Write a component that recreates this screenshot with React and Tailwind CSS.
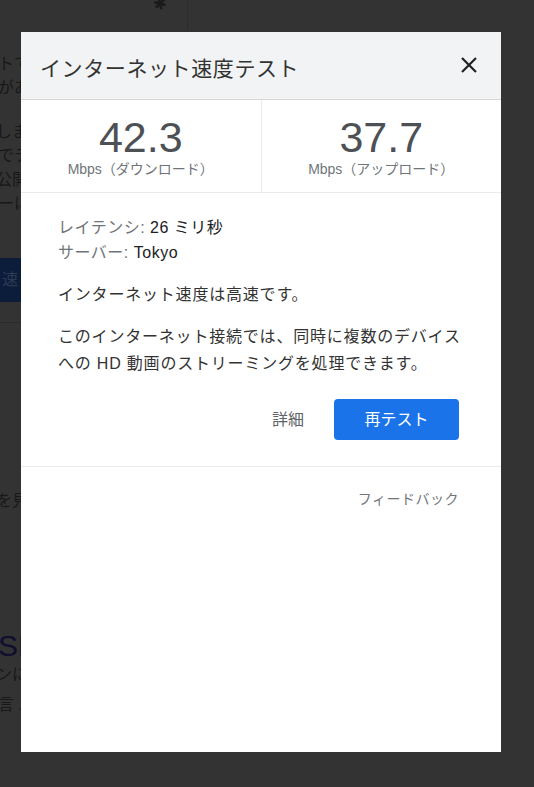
import React from "react";

const jp = { fontFamily: '"Liberation Sans", "Noto Sans CJK JP", sans-serif' };

const SpeedCell = ({ value, label, border }) => (
  <div
    className={`flex flex-1 flex-col items-center pt-[14px] ${border ? "border-r border-[#ebebeb]" : ""}`}
  >
    <div className="text-[43px] leading-[46px] text-[#4d5156]">{value}</div>
    <div className="text-[14px] leading-[18px] text-[#70757a]">{label}</div>
  </div>
);

const App = () => {
  return (
    <div
      className="relative h-[787px] w-full overflow-hidden bg-[#333333]"
      style={jp}
    >
      {/* page behind the dim overlay */}
      <div className="flex h-full text-[#181818]">
        <div className="flex w-[40px] flex-col text-[16px] leading-[24px]">
          <div className="h-[52px]" />
          <div className="-ml-[2px] whitespace-nowrap">トで</div>
          <div className="-ml-[2px] whitespace-nowrap">があ</div>
          <div className="h-[20px]" />
          <div className="-ml-[4px] whitespace-nowrap">しま</div>
          <div className="-ml-[2px] whitespace-nowrap">でテ</div>
          <div className="-ml-[4px] whitespace-nowrap">公開</div>
          <div className="-ml-[2px] whitespace-nowrap">ーに</div>
          <div className="mt-[42px] flex h-[44px] items-center bg-[#0b1d3a] pl-[2px] text-[#2c3a55]">
            速
          </div>
          <div className="mt-[20px] h-px bg-[#2a2a2a]" />
          <div className="mt-[166px] -ml-[4px] whitespace-nowrap">を見</div>
          <div className="mt-[116px] -ml-[2px] whitespace-nowrap text-[30px] leading-[34px] text-[#100e2e]">
            SE
          </div>
          <div className="-ml-[4px] whitespace-nowrap">ンに</div>
          <div className="mt-[6px] -ml-[2px] whitespace-nowrap">言 ..</div>
        </div>
        <div className="flex w-[130px] justify-end">
          <div className="mt-[-6px] h-[14px] w-[14px] rotate-45 text-[#1a1a1a]">✱</div>
        </div>
        <div className="ml-[17px] h-[30px] w-px bg-[#2c2c2c]" />
      </div>

      {/* speed test dialog */}
      <div className="absolute left-[21px] top-[32px] flex h-[720px] w-[480px] flex-col bg-white">
        <div className="flex h-[68px] items-center justify-between border-b border-[#d6d6d6] bg-[#f1f3f4] pl-[19px] pr-[23px]">
          <div className="pt-[6px] text-[21px] tracking-[0.6px] text-[#333333]">
            インターネット速度テスト
          </div>
          <svg width="18" height="18" viewBox="0 0 18 18" className="-mt-[1px]">
            <path
              d="M2 2 L16 16 M16 2 L2 16"
              stroke="#202124"
              strokeWidth="2.2"
              fill="none"
            />
          </svg>
        </div>

        <div className="flex h-[93px] border-b border-[#ebebeb]">
          <SpeedCell value="42.3" label="Mbps（ダウンロード）" border />
          <SpeedCell value="37.7" label="Mbps（アップロード）" />
        </div>

        <div className="flex flex-col px-[37px] pt-[22px] pb-[26px]">
          <div className="text-[16px] leading-[25px] tracking-[0.5px]">
            <span className="text-[#70757a]">レイテンシ: </span>
            <span className="text-[#202124]">26 ミリ秒</span>
          </div>
          <div className="text-[16px] leading-[25px] tracking-[0.5px]">
            <span className="text-[#70757a]">サーバー: </span>
            <span className="text-[#202124]">Tokyo</span>
          </div>
          <div className="mt-[17px] text-[16px] leading-[25px] tracking-[0.8px] text-[#333333]">
            インターネット速度は高速です。
          </div>
          <div className="mt-[16px] text-[16px] leading-[27px] tracking-[0.8px] text-[#333333]">
            このインターネット接続では、同時に複数のデバイスへの HD
            動画のストリーミングを処理できます。
          </div>
          <div className="mt-[22px] flex items-center justify-end gap-[30px] pr-[5px]">
            <span className="text-[16px] text-[#5f6368]">詳細</span>
            <button className="flex h-[41px] w-[125px] items-center justify-center rounded-[4px] bg-[#1a73e8] text-[16px] text-white">
              再テスト
            </button>
          </div>
        </div>

        <div className="border-t border-[#ebebeb] pt-[22px] pr-[42px] text-right text-[14px] leading-[20px] tracking-[0.5px] text-[#70757a]">
          フィードバック
        </div>
      </div>
    </div>
  );
};

export default App;
